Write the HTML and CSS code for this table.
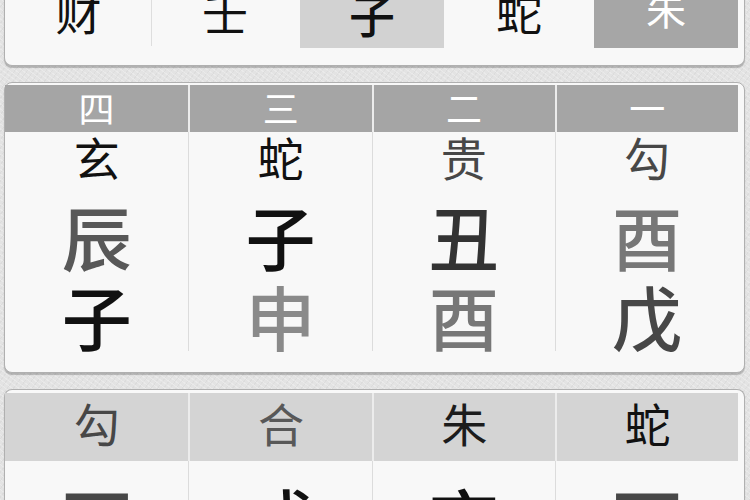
FILE: index.html
```html
<!DOCTYPE html>
<html lang="zh">
<head>
<meta charset="utf-8">
<title>六壬</title>
<link rel="stylesheet" href="styles.css">
</head>
<body>
<div class="page">
  <section class="panel panel-top">
    <div class="trow">
      <div class="tcell sep">财</div>
      <div class="tcell">壬</div>
      <div class="tcell box-light">子</div>
      <div class="tcell">蛇</div>
      <div class="tcell box-dark">朱</div>
    </div>
  </section>

  <section class="panel panel-ke">
    <div class="grid4 head head-dark">
      <div class="hcell">四</div>
      <div class="hcell">三</div>
      <div class="hcell">二</div>
      <div class="hcell">一</div>
    </div>
    <div class="grid4 kbody">
      <div class="col">
        <span class="r1 k1">玄</span>
        <span class="r2 k5">辰</span>
        <span class="r3 k1">子</span>
      </div>
      <div class="col">
        <span class="r1 k1">蛇</span>
        <span class="r2 k1">子</span>
        <span class="r3 k8">申</span>
      </div>
      <div class="col">
        <span class="r1 k4">贵</span>
        <span class="r2 k3">丑</span>
        <span class="r3 k7">酉</span>
      </div>
      <div class="col">
        <span class="r1 k4">勾</span>
        <span class="r2 k7">酉</span>
        <span class="r3 k4">戊</span>
      </div>
    </div>
  </section>

  <section class="panel panel-pan">
    <div class="grid4 head head-light">
      <div class="hcell k4">勾</div>
      <div class="hcell k5">合</div>
      <div class="hcell k2">朱</div>
      <div class="hcell k1">蛇</div>
    </div>
    <div class="grid4 pbody">
      <div class="col"><span class="r2 k4">酉</span></div>
      <div class="col"><span class="r2 k1">戌</span></div>
      <div class="col"><span class="r2 k1">亥</span></div>
      <div class="col"><span class="r2 k4">酉</span></div>
    </div>
  </section>
</div>
</body>
</html>
```

FILE: styles.css
```css
html, body {
  margin: 0;
  height: 500px;
  overflow: hidden;
}

body {
  background-color: #e3e3e3;
  background-image:
    repeating-linear-gradient(37deg, rgba(255,255,255,0.25) 0 1px, transparent 1px 4px),
    repeating-linear-gradient(-53deg, rgba(0,0,0,0.03) 0 1px, transparent 1px 5px);
  font-family: "Noto Sans CJK SC", "Noto Sans", sans-serif;
  font-weight: 400;
}

.page {
  display: flex;
  flex-direction: column;
  gap: 16px;
  padding: 0 5px 0 4px;
}

.panel {
  background: #f8f8f8;
  border: 1px solid #b0b0b0;
  border-radius: 8px;
  box-shadow: 0 2px 1px rgba(0, 0, 0, 0.22);
}

/* ---------- top panel (clipped) ---------- */
.panel-top {
  margin-top: -14px;
  border-top: none;
  border-radius: 0 0 8px 8px;
  padding: 0 6px 17px 1px;
}

.trow {
  display: grid;
  grid-template-columns: repeat(5, 1fr);
  column-gap: 3px;
  height: 62px;
}

.tcell {
  font-size: 46px;
  line-height: 48px;
  text-align: center;
  color: #111;
}

.tcell.sep {
  border-right: 1px solid #dedede;
  margin-right: -2px;
  height: 60px;
}

.box-light {
  background: #d2d2d2;
  padding-top: 3px;
  font-weight: 500;
}

.box-dark {
  background: #a6a6a6;
  color: #fff;
  font-size: 40px;
  line-height: 44px;
}

/* ---------- four columns ---------- */
.panel-ke {
  padding: 2px 6px 21px 0;
}

.panel-pan {
  padding: 3px 6px 0 0;
  border-bottom: none;
  border-radius: 8px 8px 0 0;
}

.grid4 {
  display: grid;
  grid-template-columns: repeat(4, 1fr);
}

.head .hcell {
  text-align: center;
}

.head .hcell + .hcell {
  border-left: 2px solid #ececec;
}

.head-dark .hcell {
  background: #a5a5a5;
  color: #fff;
  height: 47px;
  font-size: 36px;
  line-height: 44px;
}

.head-light .hcell {
  background: #d4d4d4;
  height: 68px;
  font-size: 46px;
  line-height: 58px;
}

.col {
  display: flex;
  flex-direction: column;
  align-items: center;
}

.col + .col {
  border-left: 1px solid #dcdcdc;
}

.r1 {
  font-size: 46px;
  line-height: 48px;
  margin-bottom: 21px;
}

.r2 {
  font-size: 70px;
  line-height: 70px;
  font-weight: 500;
}

.r3 {
  font-size: 70px;
  line-height: 70px;
  margin-top: 10px;
  font-weight: 500;
}

.pbody {
  height: 60px;
}

.pbody .col {
  padding-top: 23px;
}

/* ink shades */
.k1 { color: #111; }
.k2 { color: #1c1c1c; }
.k3 { color: #333; }
.k4 { color: #474747; }
.k5 { color: #585858; }
.k7 { color: #777; }
.k8 { color: #8a8a8a; }
```
